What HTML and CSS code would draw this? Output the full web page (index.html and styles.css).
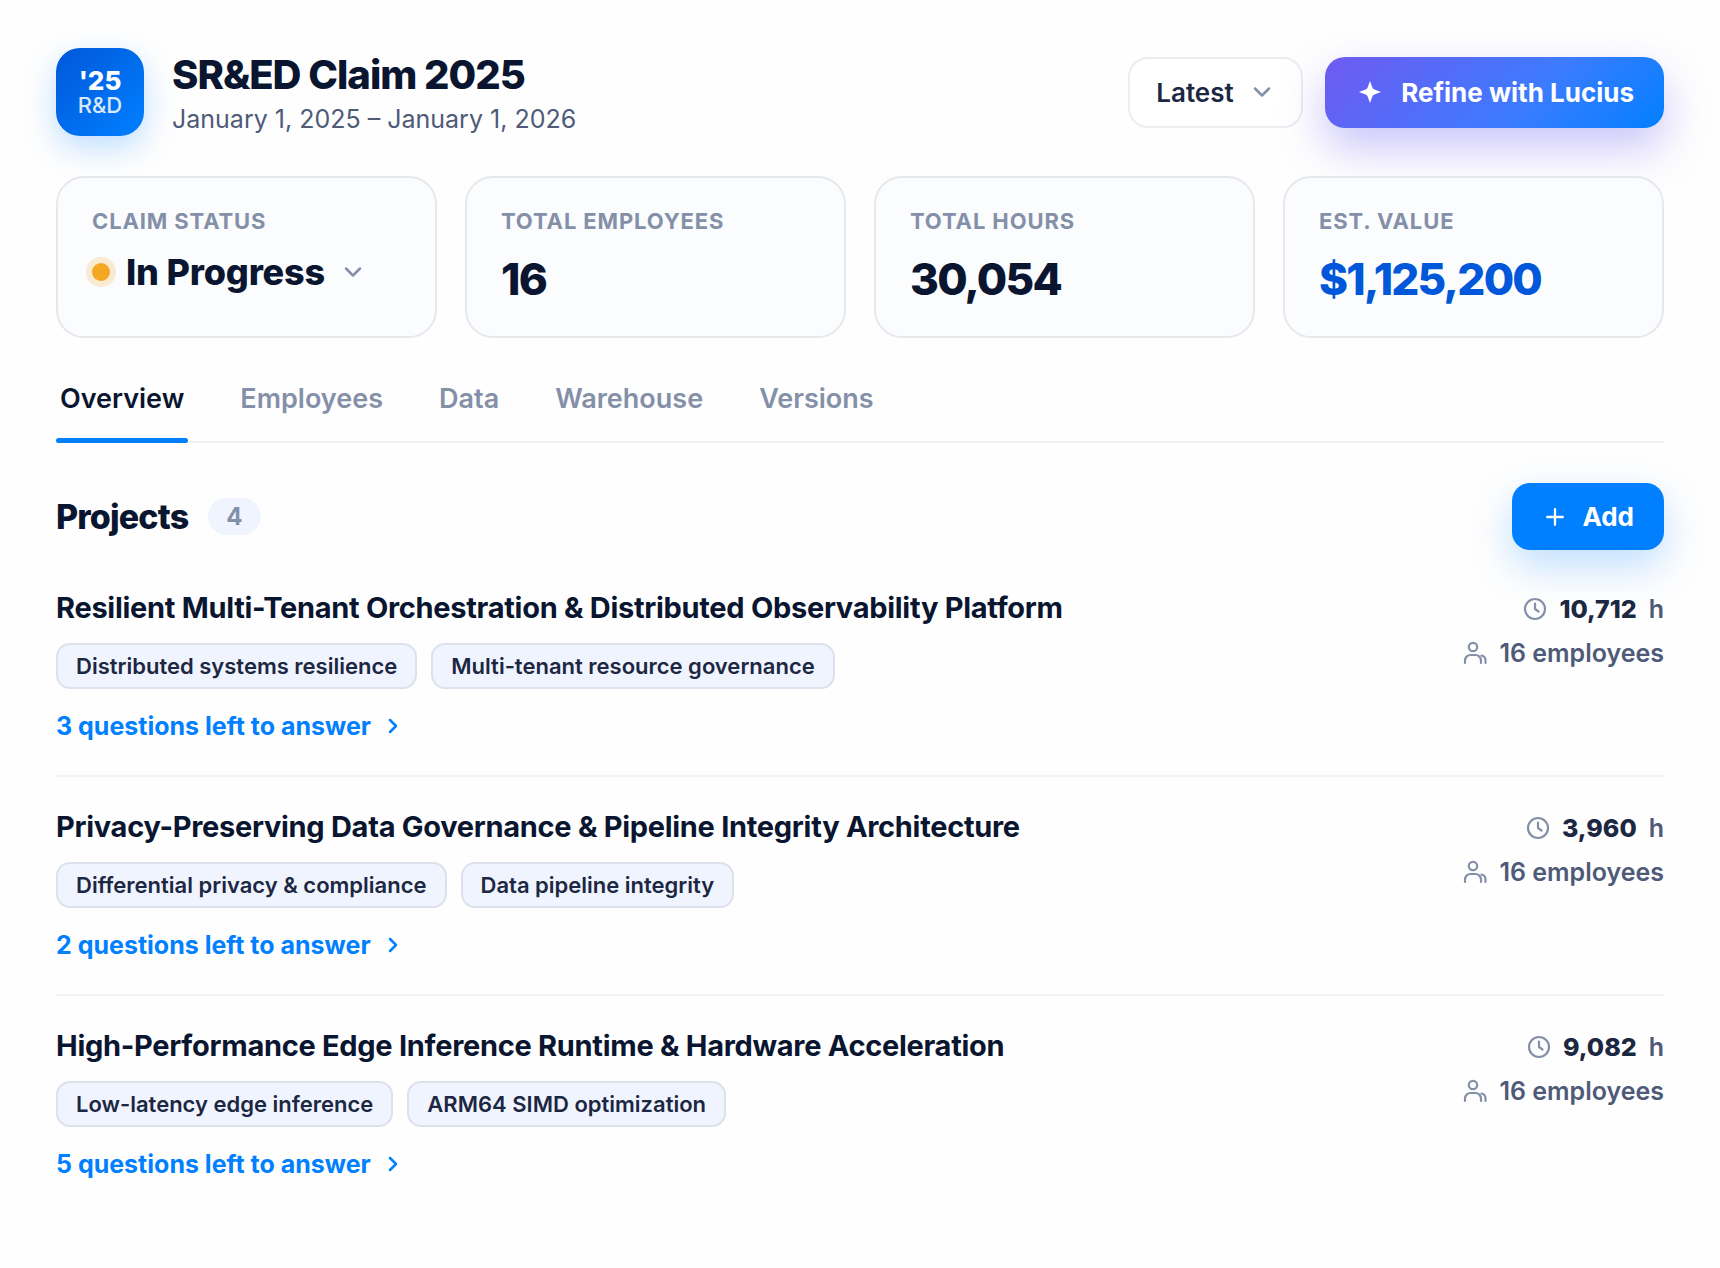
FILE: index.html
```html
<!DOCTYPE html>
<html lang="en">
  <head>
    <meta charset="utf-8">
    <meta name="viewport" content="width=device-width, initial-scale=1.0">
    <title>SR&amp;ED Claim 2025</title>
    <link rel="stylesheet" href="styles.css">
  </head>
  <body>
    <!-- shared icons -->
    <svg class="sprite" aria-hidden="true">
      <symbol id="chevron-down" viewBox="0 0 24 24"><path d="M5 8.500l7 7 7-7"/></symbol>
      <symbol id="chevron-right" viewBox="0 0 24 24"><path d="M9 6l6 6-6 6"/></symbol>
      <symbol id="clock" viewBox="0 0 24 24"><circle cx="12" cy="12" r="10"/><path d="M12 6.500V12l3.500 2.500"/></symbol>
      <symbol id="people" viewBox="0 0 24 24"><circle cx="10" cy="6" r="4.200"/><path d="M2 22v-2.500a5.500 5.500 0 0 1 5.500-5.500h5a5.500 5.500 0 0 1 5.500 5.500V22"/><path d="M18.500 14.500a5 5 0 0 1 4 4.800V22"/></symbol>
    </svg>

    <div id="wrapper">
      <header class="header">
        <div class="badge">
          <span class="badge__year">'25</span>
          <span class="badge__type">R&amp;D</span>
        </div>
        <div class="header__text">
          <h1>SR&amp;ED Claim 2025</h1>
          <p>January 1, 2025 – January 1, 2026</p>
        </div>
        <div class="header__actions">
          <div class="dropdown dropdown--version">
            <select aria-label="Version">
              <option>Latest</option>
            </select>
            <svg class="icon"><use href="#chevron-down"/></svg>
          </div>
          <button type="button" class="button button--refine">
            <svg class="star" viewBox="0 0 24 24"><path d="M12 0l2.600 7.200q.6 1.600 2.200 2.200L24 12l-7.200 2.600q-1.600.6-2.200 2.200L12 24l-2.600-7.200q-.6-1.600-2.200-2.200L0 12l7.200-2.600q1.600-.6 2.200-2.200z"/></svg>
            Refine with Lucius
          </button>
        </div>
      </header>

      <section class="stats">
        <div class="stat">
          <label class="stat__label" for="status">Claim status</label>
          <div class="status">
            <span class="status__dot"></span>
            <div class="dropdown dropdown--status">
              <select id="status">
                <option>In Progress</option>
              </select>
              <svg class="icon"><use href="#chevron-down"/></svg>
            </div>
          </div>
        </div>
        <div class="stat">
          <div class="stat__label">Total employees</div>
          <div class="stat__value">16</div>
        </div>
        <div class="stat">
          <div class="stat__label">Total hours</div>
          <div class="stat__value">30,054</div>
        </div>
        <div class="stat">
          <div class="stat__label">Est. value</div>
          <div class="stat__value stat__value--money">$1,125,200</div>
        </div>
      </section>

      <nav class="tabs">
        <a href="#overview" class="tab active">Overview</a>
        <a href="#employees" class="tab">Employees</a>
        <a href="#data" class="tab">Data</a>
        <a href="#warehouse" class="tab">Warehouse</a>
        <a href="#versions" class="tab">Versions</a>
      </nav>

      <main id="overview">
        <div class="projects-head">
          <h2>Projects</h2>
          <span class="count">4</span>
          <button type="button" class="button button--add">
            <svg class="plus" viewBox="0 0 24 24"><path d="M12 3.500v17M3.500 12h17"/></svg>
            Add
          </button>
        </div>

        <article class="project">
          <div class="project__main">
            <h3>Resilient Multi-Tenant Orchestration &amp; Distributed Observability Platform</h3>
            <div class="tags">
              <span class="tag">Distributed systems resilience</span>
              <span class="tag">Multi-tenant resource governance</span>
            </div>
            <a href="#questions-1" class="questions">3 questions left to answer <svg class="icon"><use href="#chevron-right"/></svg></a>
          </div>
          <div class="project__meta">
            <div class="meta"><svg class="icon"><use href="#clock"/></svg><strong>10,712</strong><span>h</span></div>
            <div class="meta"><svg class="icon"><use href="#people"/></svg><span>16 employees</span></div>
          </div>
        </article>

        <article class="project">
          <div class="project__main">
            <h3>Privacy-Preserving Data Governance &amp; Pipeline Integrity Architecture</h3>
            <div class="tags">
              <span class="tag">Differential privacy &amp; compliance</span>
              <span class="tag">Data pipeline integrity</span>
            </div>
            <a href="#questions-2" class="questions">2 questions left to answer <svg class="icon"><use href="#chevron-right"/></svg></a>
          </div>
          <div class="project__meta">
            <div class="meta"><svg class="icon"><use href="#clock"/></svg><strong>3,960</strong><span>h</span></div>
            <div class="meta"><svg class="icon"><use href="#people"/></svg><span>16 employees</span></div>
          </div>
        </article>

        <article class="project">
          <div class="project__main">
            <h3>High-Performance Edge Inference Runtime &amp; Hardware Acceleration</h3>
            <div class="tags">
              <span class="tag">Low-latency edge inference</span>
              <span class="tag">ARM64 SIMD optimization</span>
            </div>
            <a href="#questions-3" class="questions">5 questions left to answer <svg class="icon"><use href="#chevron-right"/></svg></a>
          </div>
          <div class="project__meta">
            <div class="meta"><svg class="icon"><use href="#clock"/></svg><strong>9,082</strong><span>h</span></div>
            <div class="meta"><svg class="icon"><use href="#people"/></svg><span>16 employees</span></div>
          </div>
        </article>
      </main>
    </div>
  </body>
</html>
```

FILE: styles.css
```css
* {
  box-sizing: border-box;
}
body {
  margin: 0;
  background: #fefefe;
  color: #0a1530;
  font-family: Inter, "Liberation Sans", sans-serif;
}
h1, h2, h3, p {
  margin: 0;
}
a {
  text-decoration: none;
}
button, select {
  font: inherit;
  color: inherit;
  letter-spacing: inherit;
  border: none;
  cursor: pointer;
}

#wrapper {
  padding: 48px 56px;
}

.sprite {
  display: none;
}
.icon {
  width: 24px;
  height: 24px;
  flex: none;
  fill: none;
  stroke: #8490a8;
  stroke-width: 2.2;
  stroke-linecap: round;
  stroke-linejoin: round;
}

/* header */
.header {
  display: flex;
  align-items: center;
  gap: 28px;
  margin-bottom: 40px;
}
.badge {
  width: 88px;
  height: 88px;
  display: flex;
  flex-direction: column;
  align-items: center;
  justify-content: center;
  border-radius: 24px;
  background: linear-gradient(135deg, #0057d9, #0080ff);
  box-shadow: 0 12px 32px rgba(0, 128, 255, 0.25);
  color: #fff;
}
.badge__year {
  font-size: 26px;
  line-height: 26px;
  font-weight: 800;
}
.badge__type {
  font-size: 22px;
  line-height: 22px;
  font-weight: 500;
  opacity: 0.85;
}
.header__text h1 {
  font-size: 40px;
  line-height: 54px;
  font-weight: 800;
  letter-spacing: -0.025em;
}
.header__text p {
  font-size: 25px;
  line-height: 34px;
  color: #4e5a78;
}
.header__actions {
  display: flex;
  gap: 22px;
  margin-left: auto;
}

/* the chevron shares the grid cell with the select */
.dropdown {
  display: inline-grid;
  align-items: center;
}
.dropdown select {
  grid-area: 1 / 1;
  appearance: none;
  background: none;
  padding: 0;
  margin: 0;
}
.dropdown .icon {
  grid-area: 1 / 1;
  justify-self: end;
  pointer-events: none;
  stroke-width: 2.5;
}
.dropdown--version {
  border: 2px solid #ebedf0;
  border-radius: 20px;
  background: #fff;
  font-size: 26px;
  font-weight: 600;
  color: #1c2742;
}
.dropdown--version select {
  height: 67px;
  padding: 0 67px 0 26px;
}
.dropdown--version .icon {
  margin-right: 27px;
}

.button {
  display: inline-flex;
  align-items: center;
  color: #fff;
  font-size: 26px;
  font-weight: 700;
}
.button--refine {
  height: 71px;
  gap: 20px;
  padding: 0 30px 0 34px;
  border-radius: 20px;
  background: linear-gradient(135deg, #6f5af0 0%, #3d7bff 60%, #0080ff 100%);
  box-shadow: 0 20px 44px rgba(108, 92, 240, 0.35);
}
.star {
  width: 22px;
  height: 22px;
  fill: #fff;
}

/* stats */
.stats {
  display: grid;
  grid-template-columns: repeat(4, 1fr);
  gap: 28px;
}
.stat {
  height: 162px;
  padding: 29px 34px;
  border: 2px solid #e6e8ec;
  border-radius: 28px;
  background: #fbfcfe;
}
.stat__label {
  display: block;
  font-size: 22px;
  line-height: 28px;
  font-weight: 700;
  letter-spacing: 0.04em;
  text-transform: uppercase;
  color: #8490a8;
}
.stat__value {
  margin-top: 17px;
  font-size: 44px;
  line-height: 54px;
  font-weight: 800;
  letter-spacing: -0.04em;
}
.stat__value--money {
  color: #0057d9;
}
.status {
  display: flex;
  align-items: center;
  gap: 16px;
  margin-top: 15px;
}
.status__dot {
  width: 18px;
  height: 18px;
  border-radius: 50%;
  background: #f5a623;
  box-shadow: 0 0 0 6px rgba(245, 166, 35, 0.2);
}
.dropdown--status {
  font-size: 36px;
  line-height: 44px;
  font-weight: 800;
  letter-spacing: -0.005em;
}
.dropdown--status select {
  padding-right: 40px;
}

/* tabs */
.tabs {
  display: flex;
  gap: 48px;
  margin-top: 36px;
  border-bottom: 2px solid #f1f2f4;
}
.tab {
  padding: 8px 4px 22px;
  margin-bottom: -2px;
  border-bottom: 5px solid transparent;
  font-size: 27px;
  line-height: 34px;
  font-weight: 600;
  color: #8490a8;
}
.tab.active {
  position: relative;
  color: #0a1530;
}
.tab.active::after {
  content: '';
  position: absolute;
  left: 0;
  right: 0;
  bottom: -5px;
  height: 5px;
  border-radius: 3px;
  background: #0080ff;
}

/* projects */
.projects-head {
  display: flex;
  align-items: center;
  gap: 20px;
  margin: 40px 0 8px;
}
.projects-head h2 {
  font-size: 34px;
  line-height: 40px;
  font-weight: 800;
  letter-spacing: -0.025em;
}
.count {
  padding: 0 18px;
  border-radius: 19px;
  background: #f0f4ff;
  color: #8490a8;
  font-size: 24px;
  line-height: 37px;
  font-weight: 700;
}
.button--add {
  height: 67px;
  gap: 16px;
  margin-left: auto;
  padding: 0 30px 0 32px;
  border-radius: 18px;
  background: #0080ff;
  box-shadow: 0 16px 40px rgba(0, 128, 255, 0.25);
}
.plus {
  width: 22px;
  height: 22px;
  fill: none;
  stroke: #fff;
  stroke-width: 2.5;
  stroke-linecap: round;
}

.project {
  display: flex;
  justify-content: space-between;
  gap: 32px;
  padding: 32px 0 34px;
  border-bottom: 2px solid #f3f4f6;
}
.project:last-child {
  border-bottom: none;
}
.project h3 {
  font-size: 29px;
  line-height: 36px;
  font-weight: 700;
  letter-spacing: -0.01em;
}
.tags {
  display: flex;
  gap: 14px;
  margin: 17px 0 22px;
}
.tag {
  padding: 0 18px;
  border: 2px solid #dde1ec;
  border-radius: 14px;
  background: #f0f4ff;
  color: #1c2742;
  font-size: 22px;
  line-height: 42px;
  font-weight: 600;
}
.questions {
  display: inline-flex;
  align-items: center;
  gap: 10px;
  color: #0080ff;
  font-size: 25px;
  line-height: 30px;
  font-weight: 700;
}
.questions .icon {
  stroke: #0080ff;
  stroke-width: 2.5;
}
.project__meta {
  flex: none;
  display: flex;
  flex-direction: column;
  align-items: flex-end;
  gap: 8px;
  padding-top: 1px;
}
.meta {
  display: flex;
  align-items: center;
  gap: 12px;
  font-size: 25px;
  line-height: 36px;
  font-weight: 600;
  color: #4e5a78;
}
.meta strong {
  font-weight: 800;
  color: #1c2742;
}
```
